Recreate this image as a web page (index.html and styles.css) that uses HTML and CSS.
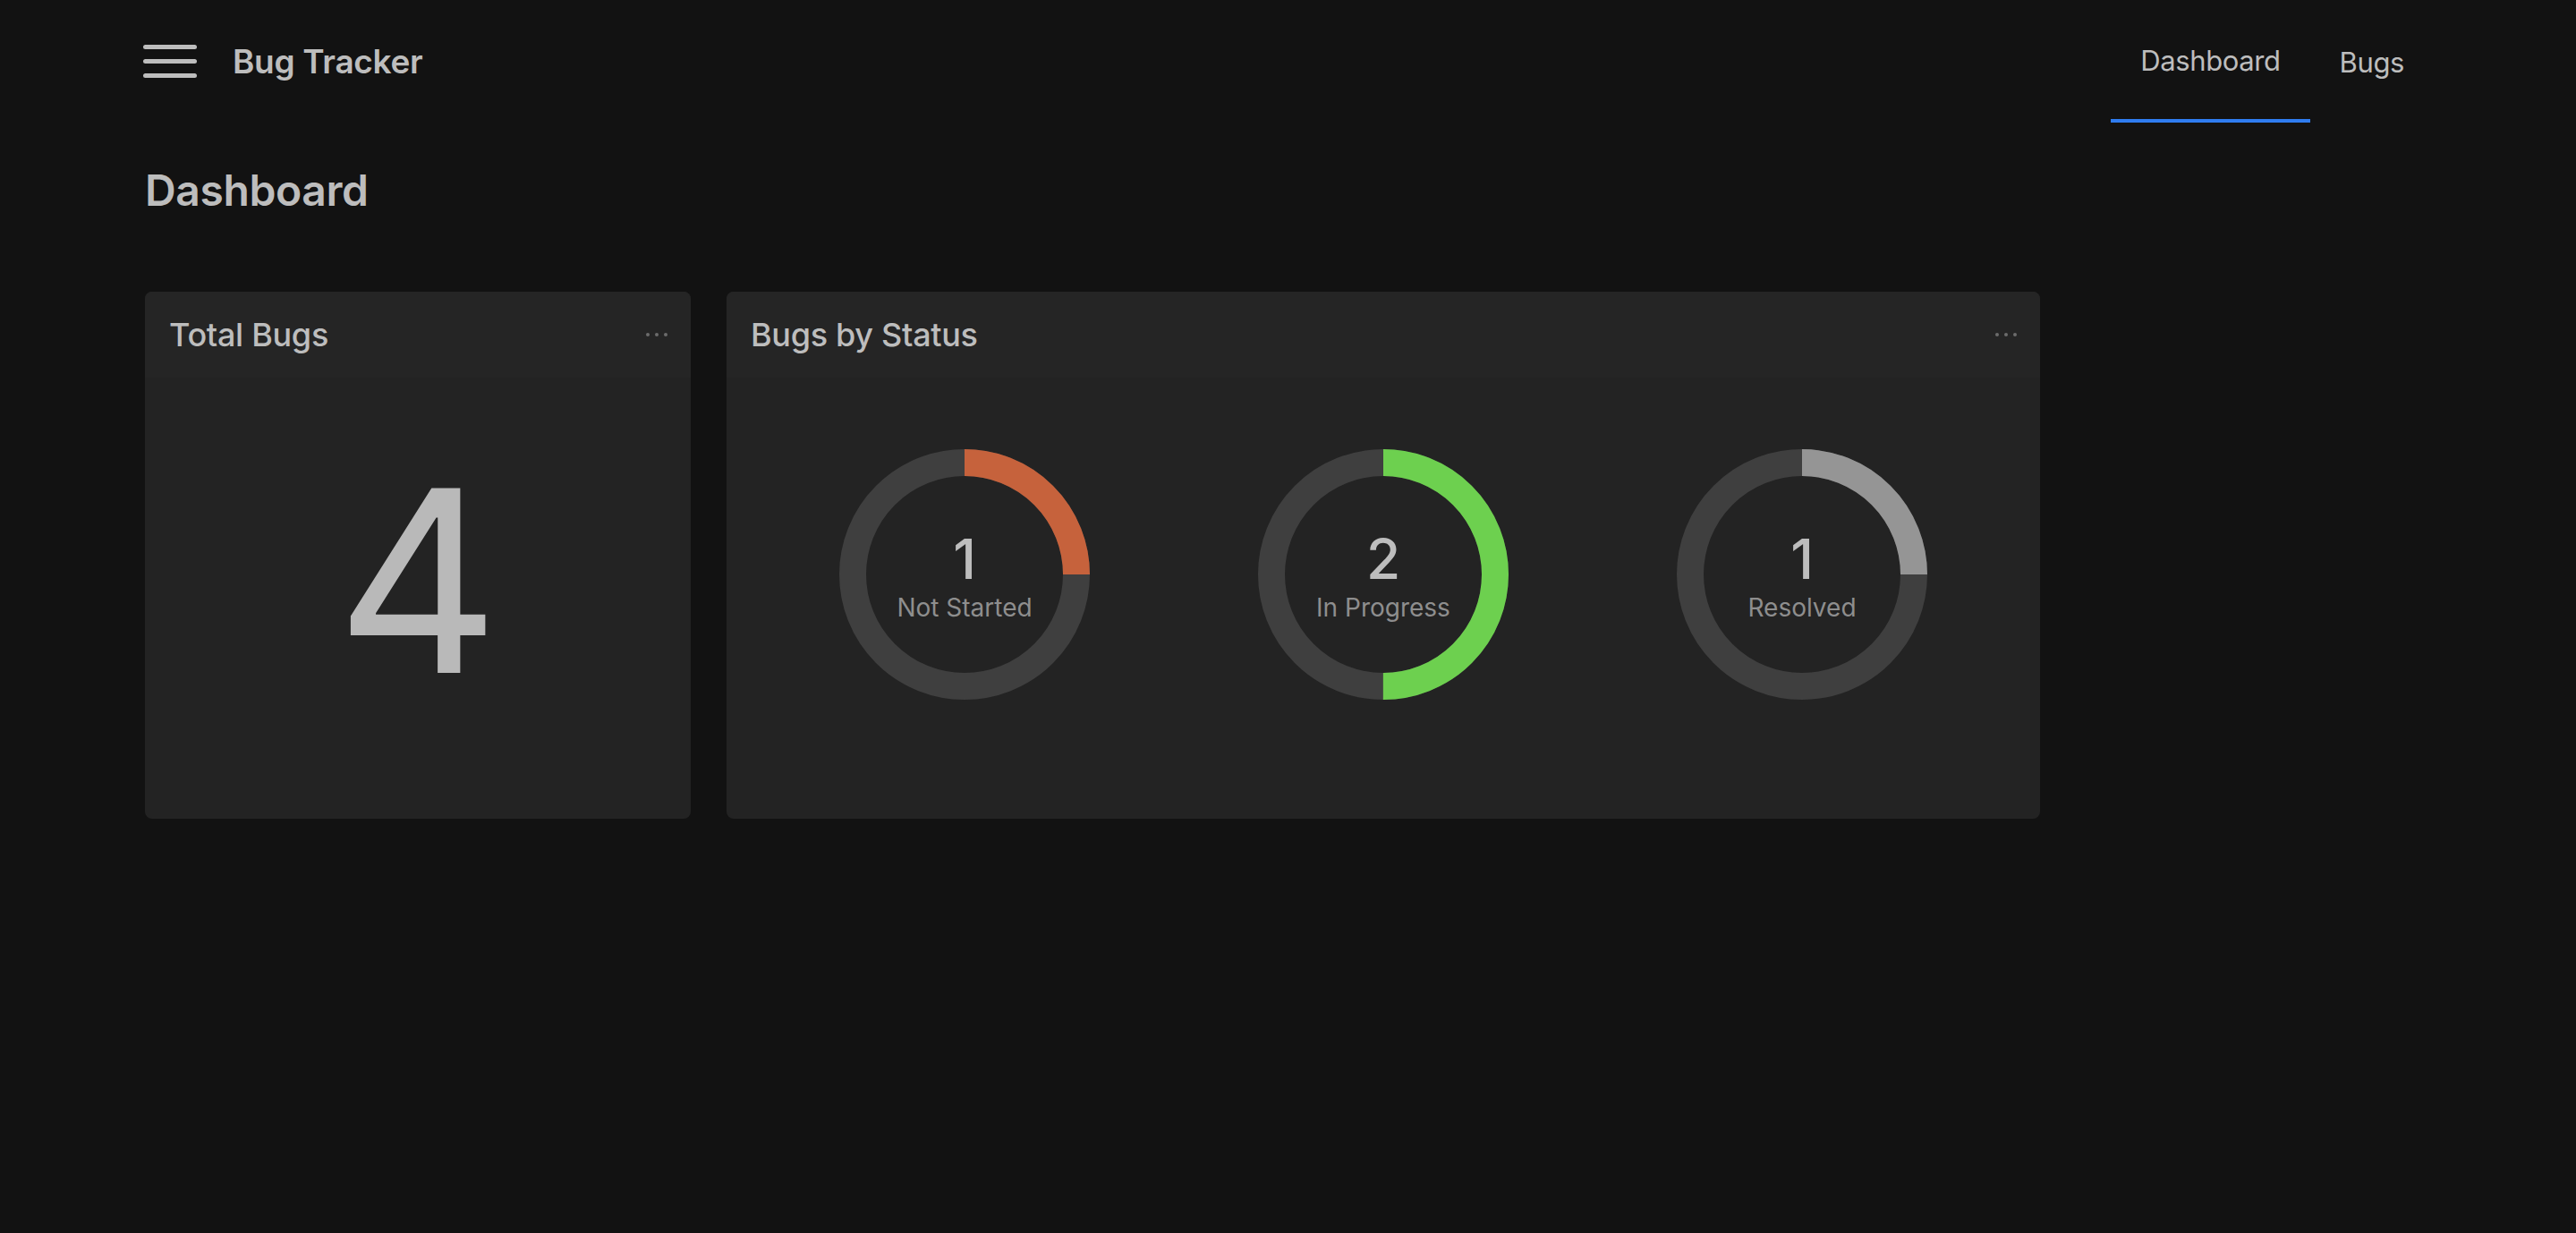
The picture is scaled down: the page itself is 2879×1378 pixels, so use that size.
FILE: index.html
```html
<!DOCTYPE html>
<html lang="en">
<head>
<meta charset="utf-8">
<title>Bug Tracker</title>
<link rel="stylesheet" href="styles.css">
</head>
<body>
<header class="topbar">
  <div class="brand">
    <button class="menu-btn" aria-label="Menu">
      <span></span><span></span><span></span>
    </button>
    <span class="app-name">Bug Tracker</span>
  </div>
  <nav class="tabs">
    <a class="tab active" href="#">Dashboard</a>
    <a class="tab" href="#">Bugs</a>
  </nav>
</header>

<main class="page">
  <h1 class="page-title">Dashboard</h1>

  <section class="cards">
    <article class="card card-total">
      <div class="card-head">
        <h2 class="card-title">Total Bugs</h2>
        <span class="more"><i></i><i></i><i></i></span>
      </div>
      <div class="card-body">
        <div class="big-number">4</div>
      </div>
    </article>

    <article class="card card-status">
      <div class="card-head">
        <h2 class="card-title">Bugs by Status</h2>
        <span class="more"><i></i><i></i><i></i></span>
      </div>
      <div class="card-body donuts">
        <div class="donut">
          <svg viewBox="0 0 280 280" width="280" height="280">
            <circle class="track" cx="140" cy="140" r="125"></circle>
            <circle class="arc arc-orange" cx="140" cy="140" r="125" stroke-dasharray="196.35 785.4"></circle>
          </svg>
          <div class="donut-label">
            <span class="donut-value">1</span>
            <span class="donut-name">Not Started</span>
          </div>
        </div>
        <div class="donut">
          <svg viewBox="0 0 280 280" width="280" height="280">
            <circle class="track" cx="140" cy="140" r="125"></circle>
            <circle class="arc arc-green" cx="140" cy="140" r="125" stroke-dasharray="392.7 785.4"></circle>
          </svg>
          <div class="donut-label">
            <span class="donut-value">2</span>
            <span class="donut-name">In Progress</span>
          </div>
        </div>
        <div class="donut">
          <svg viewBox="0 0 280 280" width="280" height="280">
            <circle class="track" cx="140" cy="140" r="125"></circle>
            <circle class="arc arc-gray" cx="140" cy="140" r="125" stroke-dasharray="196.35 785.4"></circle>
          </svg>
          <div class="donut-label">
            <span class="donut-value">1</span>
            <span class="donut-name">Resolved</span>
          </div>
        </div>
      </div>
    </article>
  </section>
</main>
</body>
</html>
```

FILE: styles.css
```css
* { box-sizing: border-box; }

html, body {
  margin: 0;
  padding: 0;
  background: #121212;
  color: #bdbdbd;
  font-family: Inter, "Noto Sans", "Liberation Sans", sans-serif;
}

.topbar {
  height: 137px;
  padding: 0 159px 0 160px;
  display: flex;
  align-items: center;
  justify-content: space-between;
}

.brand {
  display: flex;
  align-items: center;
  gap: 40px;
}

.menu-btn {
  width: 60px;
  height: 37px;
  padding: 0;
  border: 0;
  background: transparent;
  display: flex;
  flex-direction: column;
  justify-content: space-between;
  cursor: pointer;
}

.menu-btn span {
  display: block;
  height: 5px;
  width: 100%;
  border-radius: 3px;
  background: #bdbdbd;
}

.app-name {
  font-size: 37px;
  font-weight: 600;
  letter-spacing: -0.3px;
  color: #bdbdbd;
}

.tabs {
  align-self: stretch;
  display: flex;
  align-items: center;
}

.tab {
  height: 100%;
  display: flex;
  align-items: center;
  padding: 2px 33px 0;
  font-size: 31px;
  color: #bdbdbd;
  text-decoration: none;
  letter-spacing: -0.4px;
}

.tab.active {
  border-bottom: 4px solid #2f7cf0;
}

.page {
  padding: 0 160px 0 162px;
}

.page-title {
  margin: 46px 0 84px;
  font-size: 48px;
  font-weight: 600;
  letter-spacing: -0.4px;
  color: #bdbdbd;
}

.cards {
  display: flex;
  gap: 40px;
  align-items: stretch;
}

.card {
  background: #232323;
  border-radius: 8px;
  height: 589px;
  overflow: hidden;
}

.card-total { width: 610px; }
.card-status { width: 1468px; }

.card-head {
  display: flex;
  align-items: center;
  justify-content: space-between;
  padding: 26px 26px 26px 27px;
  background: #252525;
}

.card-title {
  margin: 0;
  font-size: 36px;
  font-weight: 500;
  letter-spacing: -0.3px;
  color: #bdbdbd;
}

.more {
  display: flex;
  gap: 6px;
  align-items: center;
}

.more i {
  display: block;
  width: 4px;
  height: 4px;
  border-radius: 50%;
  background: #6c6c6c;
}

.card-body {
  padding-top: 80px;
}

.big-number {
  padding-top: 5px;
  text-align: center;
  font-size: 284px;
  line-height: 1;
  font-weight: 400;
  color: #b9b9b9;
}

.donuts {
  display: flex;
  justify-content: center;
  gap: 188px;
}

.donut {
  position: relative;
  width: 280px;
  height: 280px;
}

.donut svg {
  display: block;
  transform: rotate(-90deg);
}

.donut circle {
  fill: none;
  stroke-width: 30;
}

.track { stroke: #3f3f3f; }
.arc-orange { stroke: #c6623c; }
.arc-green { stroke: #6dd04f; }
.arc-gray { stroke: #959595; }

.donut-label {
  position: absolute;
  inset: 0;
  display: flex;
  flex-direction: column;
  align-items: center;
  justify-content: center;
}

.donut-value {
  font-size: 62px;
  line-height: 74px;
  font-weight: 500;
  color: #bdbdbd;
}

.donut-name {
  font-size: 28px;
  line-height: 34px;
  color: #8e8e8e;
}
```
